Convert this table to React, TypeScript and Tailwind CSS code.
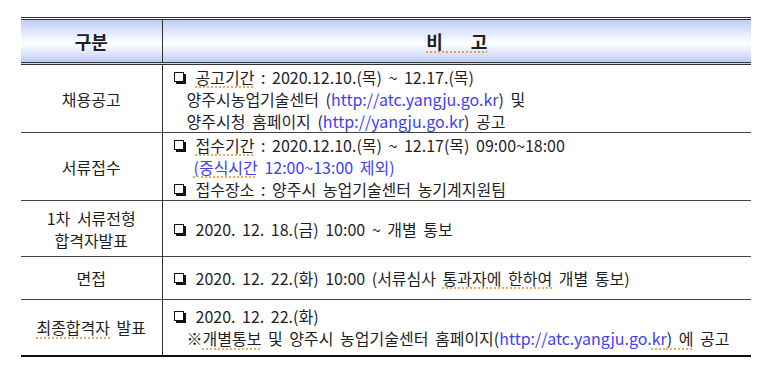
const font = "font-['Noto_Sans_CJK_KR','Noto_Sans',sans-serif]"

function Spell({ children }: { children: React.ReactNode }) {
  // spellcheck-style dotted underline seen in the source document
  return <span className="underline decoration-dotted decoration-[#e59a3a] underline-offset-[3px]">{children}</span>
}

function Box() {
  // shadowed square bullet (❐)
  return <span className="mr-[12px] ml-[1px] inline-block h-[10px] w-[10px] border border-[#111] shadow-[2px_2px_0_#111] align-[2px]" />
}

function Link({ children }: { children: React.ReactNode }) {
  return <span className="text-[#3f3ff0]">{children}</span>
}

export default function App() {
  return (
    <div className={`w-[768px] h-[371px] bg-white pt-[17px] pl-[21px] text-[16px] leading-[22px] [word-spacing:3px] text-[#1f1f1f] ${font}`}>
      <table className="w-[730px] border-collapse">
        <thead>
          <tr className="h-[45px] bg-[linear-gradient(to_bottom,#c3d0f5_0%,#e4ebfc_30%,#ffffff_55%,#dde6fb_80%,#bfcdf3_100%)] border-t-[3px] border-b-[3px] border-double border-[#333]">
            <th className="w-[141px] border-r border-[#333] text-[18px] font-bold">구분</th>
            <th className="text-[18px] font-bold">
              <Spell>
                <span className="tracking-[28px]">비</span>고
              </Spell>
            </th>
          </tr>
        </thead>
        <tbody>
          <tr className="h-[66px] border-b border-[#444]">
            <td className="border-r border-[#333] text-center">채용공고</td>
            <td className="pl-[10px] pt-[1px] align-top">
              <div><Box /><Spell>공고기간</Spell> : 2020.12.10.(목) ~ 12.17.(목)</div>
              <div className="pl-[14px]">양주시농업기술센터 (<Link>http://atc.yangju.go.kr</Link>) 및</div>
              <div className="pl-[14px]">양주시청 홈페이지 (<Link>http://yangju.go.kr</Link>) 공고</div>
            </td>
          </tr>
          <tr className="h-[68px] border-b border-[#444]">
            <td className="border-r border-[#333] text-center">서류접수</td>
            <td className="pl-[10px] align-middle">
              <div><Box /><Spell>접수기간</Spell> : 2020.12.10.(목) ~ 12.17(목) 09:00~18:00</div>
              <div className="pl-[21px] text-[#3f3ff0]"><Spell>(중식시간</Spell> 12:00~13:00 제외)</div>
              <div><Box />접수장소 : 양주시 농업기술센터 농기계지원팀</div>
            </td>
          </tr>
          <tr className="h-[56px] border-b border-[#444]">
            <td className="border-r border-[#333] text-center">1차 서류전형<br />합격자발표</td>
            <td className="pl-[10px]">
              <div><Box />2020. 12. 18.(금) 10:00 ~ 개별 통보</div>
            </td>
          </tr>
          <tr className="h-[43px] border-b border-[#444]">
            <td className="border-r border-[#333] text-center">면접</td>
            <td className="pl-[10px]">
              <div><Box />2020. 12. 22.(화) 10:00 (서류심사 <Spell>통과자에 한하여</Spell> 개별 통보)</div>
            </td>
          </tr>
          <tr className="h-[56px] border-b-2 border-[#111]">
            <td className="border-r border-[#333] text-center"><Spell>최종합격자</Spell> 발표</td>
            <td className="pl-[10px]">
              <div><Box />2020. 12. 22.(화)</div>
              <div className="pl-[14px]">※<Spell>개별통보</Spell> 및 양주시 농업기술센터 홈페이지(<Link>http://atc.yangju.go.<Spell>kr</Spell></Link><Spell>) 에</Spell> 공고</div>
            </td>
          </tr>
        </tbody>
      </table>
    </div>
  )
}
